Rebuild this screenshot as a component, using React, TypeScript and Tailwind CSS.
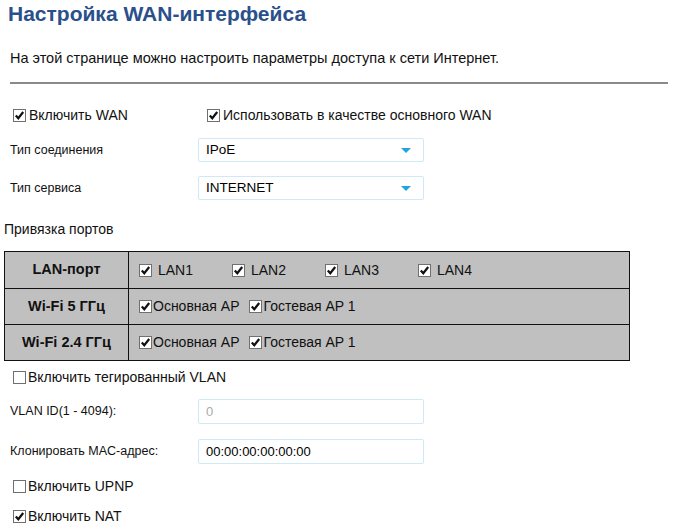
const font = { fontFamily: '"Liberation Sans", Arial, sans-serif' };

function Box({ checked }: { checked?: boolean }) {
  return (
    <span className="inline-flex h-[13px] w-[13px] shrink-0 items-center justify-center border border-[#707070] bg-white">
      {checked && (
        <svg viewBox="0 0 11 11" className="h-[11px] w-[11px]">
          <path d="M1.8 5.4 L4.3 8.2 L9.2 2" fill="none" stroke="#111" strokeWidth="2.2" />
        </svg>
      )}
    </span>
  );
}

function Check({ checked, label, gap = "gap-[3px]" }: { checked?: boolean; label: string; gap?: string }) {
  return (
    <div className={`flex items-center ${gap}`}>
      <Box checked={checked} />
      <span>{label}</span>
    </div>
  );
}

function Select({ value }: { value: string }) {
  return (
    <div className="flex h-[24px] w-[226px] items-center justify-between rounded-[2px] border border-[#cfeaf6] bg-white pl-[7px] pr-[12px] text-[13.5px] text-black">
      <span>{value}</span>
      <svg viewBox="0 0 10 5" className="h-[5px] w-[10px]">
        <path d="M0 0 H10 L5 5 Z" fill="#1ea5e0" />
      </svg>
    </div>
  );
}

function Field({ value, muted }: { value: string; muted?: boolean }) {
  return (
    <div
      className={`flex h-[25px] w-[226px] items-center rounded-[2px] border border-[#cfeaf6] bg-white pl-[7px] text-[13px] ${
        muted ? "text-[#aaaaaa]" : "text-black"
      }`}
    >
      {value}
    </div>
  );
}

const lanPorts = ["LAN1", "LAN2", "LAN3", "LAN4"];

const wifiRows = ["Wi-Fi 5 ГГц", "Wi-Fi 2.4 ГГц"];

export default function App() {
  return (
    <div className="min-h-[526px] w-[680px] bg-white text-[14px] text-[#111]" style={font}>
      {/* Header */}
      <h1 className="pl-[8px] pt-[1px] text-[21px] font-bold leading-[26px] text-[#2a4f8b]">
        Настройка WAN-интерфейса
      </h1>
      <p className="mt-[23px] pl-[10px] text-[14.5px] leading-[16px]">
        На этой странице можно настроить параметры доступа к сети Интернет.
      </p>
      <hr className="mx-[10px] mt-[16px] w-[658px] border-t-2 border-[#8a8a8a]" />

      {/* WAN toggles */}
      <div className="mt-[23px] flex pl-[13px] leading-[16px]">
        <div className="w-[194px]">
          <Check checked label="Включить WAN" />
        </div>
        <Check checked label="Использовать в качестве основного WAN" />
      </div>

      <div className="mt-[15px] flex items-center pl-[10px]">
        <span className="w-[188px] text-[12.5px]">Тип соединения</span>
        <Select value="IPoE" />
      </div>
      <div className="mt-[14px] flex items-center pl-[10px]">
        <span className="w-[188px] text-[12.5px]">Тип сервиса</span>
        <Select value="INTERNET" />
      </div>

      <div className="mt-[21px] pl-[4px] leading-[16px]">Привязка портов</div>

      {/* Port binding */}
      <table className="ml-[4px] mt-[14px] w-[626px] border-collapse border border-[#111] bg-[#c0c0c0]">
        <tbody>
          <tr className="h-[37px]">
            <td className="w-[124px] border border-[#111] text-center text-[14.5px] font-bold">LAN-порт</td>
            <td className="border border-[#111]">
              <div className="flex pl-[10px]">
                {lanPorts.map((p) => (
                  <div key={p} className="w-[93px]">
                    <Check checked label={p} gap="gap-[6px]" />
                  </div>
                ))}
              </div>
            </td>
          </tr>
          {wifiRows.map((r) => (
            <tr key={r} className="h-[36px]">
              <td className="border border-[#111] text-center text-[14.5px] font-bold">{r}</td>
              <td className="border border-[#111]">
                <div className="flex gap-[9px] pl-[10px]">
                  <Check checked label="Основная AP" gap="gap-[1px]" />
                  <Check checked label="Гостевая AP 1" gap="gap-[2px]" />
                </div>
              </td>
            </tr>
          ))}
        </tbody>
      </table>

      <div className="mt-[8px] pl-[13px] leading-[16px]">
        <Check label="Включить тегированный VLAN" gap="gap-[2px]" />
      </div>

      <div className="mt-[14px] flex items-center pl-[10px]">
        <span className="w-[188px] text-[12.5px]">VLAN ID(1 - 4094):</span>
        <Field value="0" muted />
      </div>
      <div className="mt-[15px] flex items-center pl-[10px]">
        <span className="w-[188px] text-[12.5px]">Клонировать MAC-адрес:</span>
        <Field value="00:00:00:00:00:00" />
      </div>

      <div className="mt-[14px] pl-[13px] leading-[16px]">
        <Check label="Включить UPNP" gap="gap-[2px]" />
      </div>
      <div className="mt-[14px] pl-[13px] leading-[16px]">
        <Check checked label="Включить NAT" gap="gap-[2px]" />
      </div>
    </div>
  );
}
